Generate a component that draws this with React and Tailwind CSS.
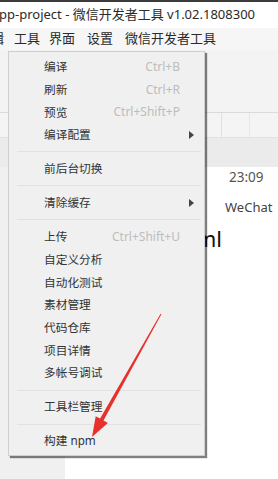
import React from "react";

const F = { fontFamily: '"Noto Sans", "Noto Sans CJK SC", sans-serif' };

function Item({ label, shortcut, sub }) {
  return (
    <div className="flex items-center h-[22.7px] pl-[35px] pr-[9px] text-[11.7px] text-[#333]">
      <span className="flex-1 whitespace-nowrap">{label}</span>
      {shortcut && <span className="text-[12px] text-[#bdbdbd] mr-[15px] whitespace-nowrap">{shortcut}</span>}
      {sub && (
        <svg width="5" height="8" viewBox="0 0 5 8" className="mr-[1px]">
          <path d="M0 0 L5 4 L0 8 Z" fill="#444" />
        </svg>
      )}
    </div>
  );
}

function Sep() {
  return (
    <div className="h-[11.3px] flex items-center pl-[8px] pr-[3px]">
      <div className="h-px w-full bg-[#e2e2e2]" />
    </div>
  );
}

export default function App() {
  return (
    <div className="relative w-[278px] h-[479px] overflow-hidden bg-white" style={F}>
      <div className="h-[2px] bg-[#3c3c3c]" />
      <div className="h-[26px] flex items-center text-[13px] text-[#2a2a2a] whitespace-nowrap -ml-[1px]">
        pp-project - 微信开发者工具 v1.02.1808300
      </div>
      <div className="h-[22px] flex items-center bg-[#f6f6f6] text-[13px] text-[#2a2a2a] whitespace-nowrap">
        <span className="-ml-[9px]">辑</span>
        <span className="ml-[10px]">工具</span>
        <span className="ml-[9px]">界面</span>
        <span className="ml-[12px]">设置</span>
        <span className="ml-[12px]">微信开发者工具</span>
      </div>
      <div className="h-[63px] bg-[#f3f3f3] border-b border-[#dadada]" />
      <div className="h-[25px] bg-[#f4f4f4] flex border-b border-[#e2e2e2]">
        <div className="w-[222px] border-r border-[#e0e0e0]" />
        <div className="w-[28px] border-r border-[#e6e6e6]" />
      </div>
      <div className="h-[29px] bg-[#ebebeb]" />
      <div className="flex h-[400px]">
        <div className="w-[65px] bg-[#f0f0f0]" />
        <div className="flex-1 bg-white flex flex-col">
          <div className="text-[13.5px] leading-[18px] text-[#555] pl-[164px] mt-[1px]">23:09</div>
          <div className="text-[13px] leading-[18px] text-[#444] pl-[160px] mt-[12px]">WeChat</div>
          <div className="w-[157px] text-right text-[22px] leading-[28px] text-[#111] mt-[8px] whitespace-nowrap">index.wxml</div>
        </div>
      </div>

      {/* dropdown menu */}
      <div className="absolute left-[8px] top-[51px] w-[197px] bg-[#f0f0f0] border border-[#cfcfcf] pt-[3.6px] pb-[3px] shadow-[2px_2px_1px_rgba(0,0,0,0.5)]">
        <Item label="编译" shortcut="Ctrl+B" />
        <Item label="刷新" shortcut="Ctrl+R" />
        <Item label="预览" shortcut="Ctrl+Shift+P" />
        <Item label="编译配置" sub />
        <Sep />
        <Item label="前后台切换" />
        <Sep />
        <Item label="清除缓存" sub />
        <Sep />
        <Item label="上传" shortcut="Ctrl+Shift+U" />
        <Item label="自定义分析" />
        <Item label="自动化测试" />
        <Item label="素材管理" />
        <Item label="代码仓库" />
        <Item label="项目详情" />
        <Item label="多帐号调试" />
        <Sep />
        <Item label="工具栏管理" />
        <Sep />
        <Item label="构建 npm" />
      </div>

      {/* red arrow */}
      <svg className="absolute left-0 top-0 pointer-events-none" width="278" height="479" viewBox="0 0 278 479">
        <polygon
          points="161.4,314.2 160.6,313.8 100.1,418.6 95.7,416.2 92,437 107.9,423 103.5,420.6"
          fill="#e8302c"
        />
      </svg>
    </div>
  );
}
